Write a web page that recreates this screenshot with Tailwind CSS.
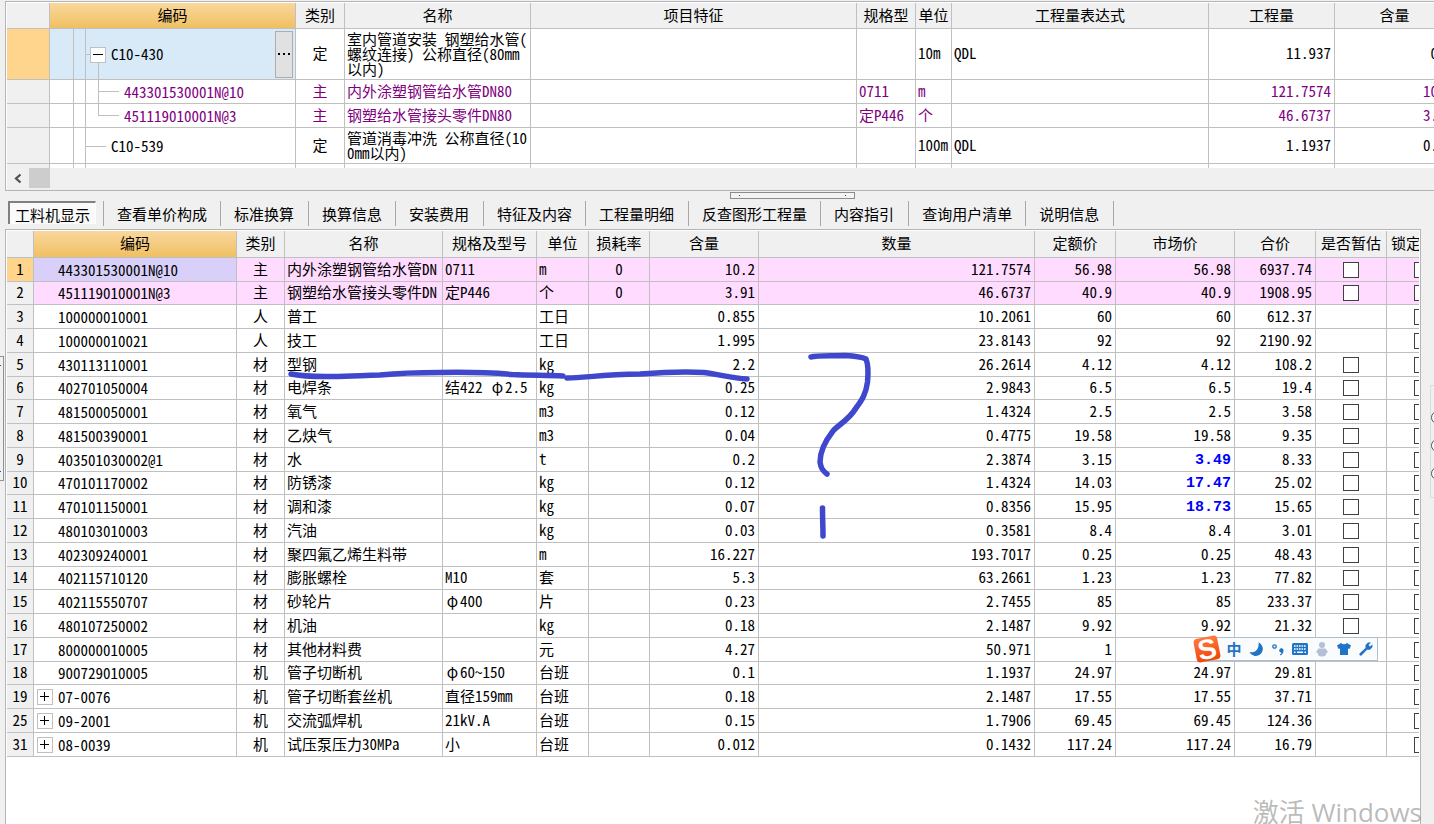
<!DOCTYPE html>
<html lang="zh-CN">
<head>
<meta charset="utf-8">
<title>工料机显示</title>
<script src="https://cdn.jsdelivr.net/npm/@tailwindcss/browser@4"></script>
</head>
<body class="relative flex h-screen flex-col overflow-hidden bg-[#f0f0f0] pt-px font-['Noto_Sans_Mono_CJK_SC','Noto_Sans_CJK_SC',monospace] text-[15px] leading-[18px] text-black">

<!-- Bill of quantities -->
<section class="ml-[5px] overflow-hidden border-y border-l border-[#b4b4b8] bg-white pt-px pl-px">
  <table class="w-[calc(100%+21px)] table-fixed border-separate border-spacing-0 whitespace-nowrap [&_td]:overflow-hidden [&_td]:border-r [&_td]:border-b [&_td]:border-[#c0c0c0] [&_td]:p-0 [&_td]:pb-0.5 [&_th]:border-r [&_th]:border-b [&_th]:border-[#c0c0c0] [&_th]:p-0 [&_th]:pb-0.5 [&_th]:font-normal">
    <colgroup>
      <col class="w-[43px]"><col class="w-[246px]"><col class="w-[49px]"><col class="w-[186px]"><col><col class="w-[59px]"><col class="w-[36px]"><col class="w-[257px]"><col class="w-[126px]"><col class="w-[120px]">
    </colgroup>
    <thead>
      <tr class="h-[26px] bg-[#f0f0f0]">
        <th></th><th class="bg-linear-to-b from-[#f9d79c] to-[#f0c060]">编码</th><th>类别</th><th>名称</th><th>项目特征</th><th>规格型</th><th>单位</th><th>工程量表达式</th><th>工程量</th><th>含量</th>
      </tr>
    </thead>
    <tbody>
      <tr class="h-[51px]">
        <td class="bg-[#ffd48c]"></td>
        <td class="bg-[#d8eaf8] pb-0!">
          <div class="flex items-center">
            <svg class="h-[50px] w-[61px] shrink-0" viewBox="0 0 61 50" fill="none" stroke="#c0c0c0" shape-rendering="crispEdges"><path d="M23.5 0V50M35.5 0V50M36 25.5H40M48.5 33V50"/><rect x="40.500" y="18.500" width="15" height="15" fill="#fff"/><path d="M43 25.500H53" stroke="#000" stroke-width="1"/></svg>
            <span class="flex-1">C10-430</span>
            <button type="button" aria-label="更多" class="mr-0.5 flex h-[47px] w-[18px] items-center justify-center gap-[3px] border border-[#adadad] bg-[#e1e1e1]"><span class="size-0.5 bg-black"></span><span class="size-0.5 bg-black"></span><span class="size-0.5 bg-black"></span></button>
          </div>
        </td>
        <td class="text-center">定</td>
        <td><div class="pl-0.5 leading-[15px]">室内管道安装 钢塑给水管(<br>螺纹连接) 公称直径(80mm<br>以内)</div></td>
        <td></td><td></td><td><div class="pl-0.5">10m</div></td><td><div class="pl-0.5">QDL</div></td>
        <td class="text-right"><div class="pr-[3px]">11.937</div></td><td class="text-right"><div class="pr-4">0</div></td>
      </tr>
      <tr class="h-6 text-[#800080]">
        <td class="bg-[#f0f0f0]"></td>
        <td class="pb-0!"><div class="flex items-center"><svg class="h-[23px] w-[74px] shrink-0" viewBox="0 0 74 23" fill="none" stroke="#c0c0c0" shape-rendering="crispEdges"><path d="M23.5 0V23M35.5 0V23M48.5 0V23M48 11.5H69"/></svg>443301530001N@10</div></td>
        <td class="text-center">主</td><td><div class="pl-0.5">内外涂塑钢管给水管DN80</div></td><td></td><td><div class="pl-0.5">0711</div></td><td><div class="pl-0.5">m</div></td><td></td>
        <td class="text-right"><div class="pr-[3px]">121.7574</div></td><td class="text-right"><div class="pr-4">10</div></td>
      </tr>
      <tr class="h-6 text-[#800080]">
        <td class="bg-[#f0f0f0]"></td>
        <td class="pb-0!"><div class="flex items-center"><svg class="h-[23px] w-[74px] shrink-0" viewBox="0 0 74 23" fill="none" stroke="#c0c0c0" shape-rendering="crispEdges"><path d="M23.5 0V23M35.5 0V23M48.5 0V12M48 11.5H69"/></svg>451119010001N@3</div></td>
        <td class="text-center">主</td><td><div class="pl-0.5">钢塑给水管接头零件DN80</div></td><td></td><td><div class="pl-0.5">定P446</div></td><td><div class="pl-0.5">个</div></td><td></td>
        <td class="text-right"><div class="pr-[3px]">46.6737</div></td><td class="text-right"><div class="pr-4">3.</div></td>
      </tr>
      <tr class="h-9">
        <td class="bg-[#f0f0f0]"></td>
        <td class="pb-0!"><div class="flex items-center"><svg class="h-[35px] w-[61px] shrink-0" viewBox="0 0 61 35" fill="none" stroke="#c0c0c0" shape-rendering="crispEdges"><path d="M23.5 0V35M35.5 0V35M36 18.5H56"/></svg>C10-539</div></td>
        <td class="text-center">定</td><td><div class="pl-0.5 leading-[15px]">管道消毒冲洗 公称直径(10<br>0mm以内)</div></td><td></td><td></td><td><div class="pl-0.5">100m</div></td><td><div class="pl-0.5">QDL</div></td>
        <td class="text-right"><div class="pr-[3px]">1.1937</div></td><td class="text-right"><div class="pr-4">0.</div></td>
      </tr>
      <tr class="h-1 [&>td]:border-b-0">
        <td class="bg-[#f0f0f0]"></td><td class="pb-0!"><svg class="block h-1 w-[61px]" viewBox="0 0 61 4" stroke="#c0c0c0" shape-rendering="crispEdges"><path d="M23.5 0V4M35.500 0V4"/></svg></td><td></td><td></td><td></td><td></td><td></td><td></td><td></td><td></td>
      </tr>
    </tbody>
  </table>
  <div class="flex h-[22px] bg-[#f0f0f0]">
    <button type="button" aria-label="向左滚动" class="flex w-[22px] items-center justify-center"><svg class="size-3" viewBox="0 0 12 12" fill="none" stroke="#505050" stroke-width="2.200"><path d="M8.500 1.500L4 5.500L8.500 9.500"/></svg></button>
    <div class="h-5 w-[21px] bg-[#cdcdcd]"></div>
  </div>
</section>

<!-- Splitter grip -->
<div class="flex h-[9px] shrink-0 items-center justify-center pl-[150px]">
  <div class="flex h-[7px] w-[125px] items-center justify-between border border-[#8c8c8c] bg-[#f4f4f4] px-2"><span class="size-px bg-[#4040c0]"></span><span class="size-px bg-[#4040c0]"></span></div>
</div>

<!-- Detail tabs -->
<nav role="tablist" class="ml-2 flex h-[29px] shrink-0 items-start whitespace-nowrap pt-px [&>button]:h-[25px] [&>button]:border-r [&>button]:border-[#a8a8a8] [&>button]:pr-[13px] [&>button]:pl-[13px] [&>button:nth-child(odd)]:pr-3.5">
  <div class="flex h-[25px] w-24 shrink-0 border-r border-[#a8a8a8]"><button type="button" role="tab" aria-selected="true" class="h-[23px] w-[88px] border-t-2 border-r border-l-2 border-t-[#808080] border-r-white border-l-[#808080] bg-[#fafafa] pt-0.5">工料机显示</button></div>
  <button type="button" role="tab">查看单价构成</button>
  <button type="button" role="tab">标准换算</button>
  <button type="button" role="tab">换算信息</button>
  <button type="button" role="tab">安装费用</button>
  <button type="button" role="tab">特征及内容</button>
  <button type="button" role="tab">工程量明细</button>
  <button type="button" role="tab">反查图形工程量</button>
  <button type="button" role="tab">内容指引</button>
  <button type="button" role="tab">查询用户清单</button>
  <button type="button" role="tab">说明信息</button>
</nav>

<!-- Labour, material and machine detail -->
<main class="flex min-h-0 flex-1">
  <div class="w-[5px] shrink-0 pt-[127px]">
    <div class="flex h-[125px] w-[4px] flex-col justify-between border-y border-r border-[#909090] py-2"><span class="size-px bg-[#4040c0]"></span><span class="size-px bg-[#4040c0]"></span></div>
  </div>
  <section class="min-w-0 flex-1 border-x border-t border-[#b4b4b8] bg-white p-px pb-0">
    <div class="overflow-hidden">
      <table class="w-[calc(100%+38px)] table-fixed border-separate border-spacing-0 whitespace-nowrap [&_td]:overflow-hidden [&_td]:border-r [&_td]:border-b [&_td]:border-[#c0c0c0] [&_td]:px-0.5 [&_td]:pt-0 [&_td]:pb-0.5 [&_th]:border-r [&_th]:border-b [&_th]:border-[#c0c0c0] [&_th]:p-0 [&_th]:pb-0.5 [&_th]:font-normal">
        <colgroup>
          <col class="w-[27px]"><col class="w-[203px]"><col class="w-[48px]"><col class="w-[158px]"><col class="w-[94px]"><col class="w-[52px]"><col class="w-[61px]"><col class="w-[109px]"><col><col class="w-[81px]"><col class="w-[119px]"><col class="w-[81px]"><col class="w-[71px]"><col class="w-[70px]">
        </colgroup>
        <thead>
          <tr class="h-[27px] bg-[#f0f0f0]">
            <th></th><th class="bg-linear-to-b from-[#f9d79c] to-[#f0c060]">编码</th><th>类别</th><th>名称</th><th>规格及型号</th><th>单位</th><th>损耗率</th><th>含量</th><th>数量</th><th>定额价</th><th>市场价</th><th>合价</th><th>是否暂估</th><th class="text-left"><span class="pl-1">锁定</span></th>
          </tr>
        </thead>
        <tbody id="rows" class="[&>tr]:h-6 [&>tr:nth-child(4n+2)]:h-[23px]"></tbody>
      </table>
    </div>
  </section>
  <div class="w-[13px] shrink-0 overflow-hidden pt-[156px] pl-[9px]">
    <div class="flex h-[113px] w-8 flex-col gap-[15px] border border-[#dcdcdc] pt-[25px]">
      <input type="radio" name="side" aria-label="选项一" class="size-[13px] shrink-0 appearance-none rounded-full border border-[#505050] bg-white">
      <input type="radio" name="side" aria-label="选项二" class="size-[13px] shrink-0 appearance-none rounded-full border border-[#505050] bg-white">
      <input type="radio" name="side" aria-label="选项三" class="size-[13px] shrink-0 appearance-none rounded-full border border-[#505050] bg-white">
    </div>
  </div>
</main>

<!-- Pen marks -->
<svg class="pointer-events-none absolute top-0 left-0 h-[824px] w-[1434px]" viewBox="0 0 1434 824" fill="none" stroke="#3f48cc" stroke-width="5.500" stroke-linecap="round" stroke-linejoin="round">
  <path d="M291 374C300 376 312 376.500 326 376.500C345 377 360 375.500 380 375C400 373 420 372.500 440 372.500C470 372 490 372.500 512 374.500C530 375.500 548 375 563 376"/>
  <path d="M567 378C585 378 600 374.500 640 374C665 372 690 371.500 704 372.500C722 375 732 378 747 379"/>
  <path d="M811 357C816 355 830 356 845 355.500C854 356 863 357.500 866 359C869 366 868 376 867.500 382C866 394 862 400 856 408C849 420 838 425 833 431C826 440 820 450 820 462C821 468 822 470 827 474"/>
  <path d="M822.500 508C822.500 518 823 528 823 536"/>
</svg>

<!-- Input method bar -->
<div role="toolbar" aria-label="输入法" class="absolute top-[635px] left-[1193px] flex h-[27px] items-center">
  <svg class="z-10 size-7 shrink-0" viewBox="0 0 28 28"><defs><linearGradient id="g" x2="0" y2="1"><stop stop-color="#ff7a3c"/><stop offset="1" stop-color="#f04408"/></linearGradient></defs><g transform="rotate(-11 14 14)"><rect x="2" y="2" width="24" height="24" rx="4" fill="url(#g)"/><text x="14" y="24" text-anchor="middle" font-family="Liberation Sans" font-weight="700" font-size="28" fill="#fff">S</text></g></svg>
  <div class="-ml-3.5 flex h-6 items-center border border-[#a9bfd3] bg-[#f9fbfd] pl-[15px] text-[#1f74c7] [&>button]:flex [&>button]:w-[22px] [&>button]:items-center [&>button]:justify-center">
    <button type="button" class="font-bold">中</button>
    <button type="button" aria-label="半角"><svg class="size-4" viewBox="0 0 16 16"><path d="M10.500 1.500A7 7 0 1 1 1.500 11C6 12.500 11.500 9 10.500 1.500Z" fill="currentColor"/></svg></button>
    <button type="button" aria-label="中文标点"><svg class="size-4" viewBox="0 0 16 16"><circle cx="4.500" cy="5.500" r="1.700" fill="none" stroke="currentColor" stroke-width="1.300"/><path d="M9.500 8.500a2.100 2.100 0 0 1 4 0.500c.3 2-1 4.500-3 5.500l-.6-.9c1-.7 1.500-1.400 1.500-2.200A1.900 1.900 0 0 1 9.500 8.500Z" fill="currentColor"/></svg></button>
    <button type="button" aria-label="软键盘"><svg class="size-4" viewBox="0 0 16 16"><rect y="2" width="16" height="12" rx="1.500" fill="currentColor"/><path d="M2 5H14M2 8H14" stroke="#fff" stroke-width="1.500" stroke-dasharray="1.600 .9"/><path d="M2 11.300H3.500M5 11.300H11M12.500 11.300H14" stroke="#fff" stroke-width="1.500"/></svg></button>
    <button type="button" aria-label="账户" class="text-[#b3bfd5]"><svg class="size-4" viewBox="0 0 16 16" fill="currentColor"><circle cx="8" cy="4" r="3"/><path d="M4.500 7.500H11.500L14 11L12 12.500V14Q10.500 15.500 8 15.500T4 14V12.500L2 11Z"/></svg></button>
    <button type="button" aria-label="皮肤"><svg class="size-4" viewBox="0 0 16 16"><path d="M5 2Q8 4.500 11 2L15 4.500L13.500 8L12 7.500V14H4V7.500L2.500 8L1 4.500Z" fill="currentColor"/></svg></button>
    <button type="button" aria-label="工具箱"><svg class="size-4" viewBox="0 0 16 16"><path d="M13 1.500L10 1.500L7.500 4V7L1.500 12.500A1.500 1.500 0 0 0 3.500 14.500L9 8.800H12L14.500 6V3.500L12 5.500L10.500 4Z" fill="currentColor"/></svg></button>
  </div>
</div>

<!-- Activation notice -->
<p class="pointer-events-none absolute right-3 -bottom-1.5 font-['Open_Sans','Noto_Sans_CJK_SC',sans-serif] text-[26px] leading-9 text-[#808080]/55">激活 Windows</p>

<script>
// no, code, kind, name, spec, unit, loss, content, quantity, base price, market price, total, provisional checkbox
const data = `1|443301530001N@10|主|内外涂塑钢管给水管DN|0711|m|0|10.2|121.7574|56.98|56.98|6937.74|y
2|451119010001N@3|主|钢塑给水管接头零件DN|定P446|个|0|3.91|46.6737|40.9|40.9|1908.95|y
3|100000010001|人|普工||工日||0.855|10.2061|60|60|612.37|
4|100000010021|人|技工||工日||1.995|23.8143|92|92|2190.92|
5|430113110001|材|型钢||kg||2.2|26.2614|4.12|4.12|108.2|y
6|402701050004|材|电焊条|结422 φ2.5|kg||0.25|2.9843|6.5|6.5|19.4|y
7|481500050001|材|氧气||m3||0.12|1.4324|2.5|2.5|3.58|y
8|481500390001|材|乙炔气||m3||0.04|0.4775|19.58|19.58|9.35|y
9|403501030002@1|材|水||t||0.2|2.3874|3.15|*3.49|8.33|y
10|470101170002|材|防锈漆||kg||0.12|1.4324|14.03|*17.47|25.02|y
11|470101150001|材|调和漆||kg||0.07|0.8356|15.95|*18.73|15.65|y
12|480103010003|材|汽油||kg||0.03|0.3581|8.4|8.4|3.01|y
13|402309240001|材|聚四氟乙烯生料带||m||16.227|193.7017|0.25|0.25|48.43|y
14|402115710120|材|膨胀螺栓|M10|套||5.3|63.2661|1.23|1.23|77.82|y
15|402115550707|材|砂轮片|φ400|片||0.23|2.7455|85|85|233.37|y
16|480107250002|材|机油||kg||0.18|2.1487|9.92|9.92|21.32|y
17|800000010005|材|其他材料费||元||4.27|50.971|1|||
18|900729010005|机|管子切断机|φ60~150|台班||0.1|1.1937|24.97|24.97|29.81|
19|+07-0076|机|管子切断套丝机|直径159mm|台班||0.18|2.1487|17.55|17.55|37.71|
25|+09-2001|机|交流弧焊机|21kV.A|台班||0.15|1.7906|69.45|69.45|124.36|
31|+08-0039|机|试压泵压力30MPa|小|台班||0.012|0.1432|117.24|117.24|16.79|`;

const tick = label => `<input type="checkbox" aria-label="${label}" class="mx-auto block size-4 appearance-none border border-[#404040] bg-white">`;
const num = v => `<td class="text-right"><div class="pr-px">${v}</div></td>`;
const spec = v => v.replace('φ', '<span class="inline-block w-[15px] text-center">φ</span>');

document.getElementById('rows').innerHTML = data.split('\n').map(line => {
  const [no, code, kind, name, sp, unit, loss, content, qty, base, market, total, prov] = line.split('|');
  const first = no === '1';
  const group = code[0] === '+';
  const codeCell = group
    ? `<div class="flex items-center gap-[5px] pl-px"><button type="button" aria-label="展开" class="flex size-4 items-center justify-center border border-[#c0c0c0] bg-white"><svg class="size-[10px]" viewBox="0 0 10 10" stroke="#000" shape-rendering="crispEdges"><path d="M0 4.5H9M4.5 0V9"/></svg></button>${code.slice(1)}</div>`
    : `<div class="pl-[22px]">${code}</div>`;
  return `<tr class="${kind === '主' ? 'bg-[#ffdcff]' : 'bg-white'}">
    <td class="text-center ${first ? 'bg-[#ffd48c]' : 'bg-[#f0f0f0]'}">${no}</td>
    <td class="pb-0! ${first ? 'bg-[#d8d0f8]' : ''}">${codeCell}</td>
    <td class="text-center">${kind}</td><td>${name}</td><td>${spec(sp)}</td><td>${unit}</td>
    <td class="text-center">${loss}</td>${num(content)}${num(qty)}${num(base)}
    ${market[0] === '*' ? `<td class="pt-0.5! pb-0! text-right font-['Liberation_Mono',monospace] font-bold text-[#0000ff]"><div class="pr-px">${market.slice(1)}</div></td>` : num(market)}
    ${num(total)}<td class="pb-0!">${prov ? tick('是否暂估 ' + no) : ''}</td><td class="pb-0!">${tick('锁定 ' + no)}</td></tr>`;
}).join('');
</script>
</body>
</html>
